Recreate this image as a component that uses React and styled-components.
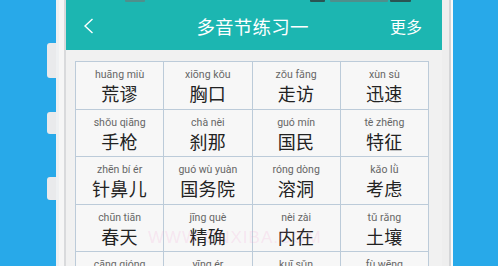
import React from 'react';
import styled, { createGlobalStyle } from 'styled-components';

const GlobalStyle = createGlobalStyle`
  html, body {
    margin: 0;
    padding: 0;
    background: #28a9e9;
  }
`;

const Stage = styled.div`
  display: flex;
  height: 266px;
  width: 498px;
  overflow: hidden;
  background: #28a9e9;
  font-family: "Noto Sans", "Noto Sans CJK SC", sans-serif;
`;

const BlueSide = styled.div`
  width: ${props => props.w}px;
  flex-shrink: 0;
`;

const ButtonRail = styled.div`
  width: 9px;
  flex-shrink: 0;
  display: flex;
  flex-direction: column;
  padding-top: 43px;
`;

const SideButton = styled.div`
  height: ${props => props.h}px;
  flex-shrink: 0;
  margin-bottom: ${props => props.gap}px;
  background: #e9eaec;
  border-radius: 3px 0 0 3px;
`;

const Bezel = styled.div`
  width: ${props => props.w}px;
  flex-shrink: 0;
  background: #f6f6f6;
  box-sizing: border-box;
  ${props => props.side === 'left'
    ? 'border-right: 2px solid #d9dadc;'
    : 'border-left: 7px solid #eeeeee; border-right: 2px solid #fafafa;'}
  box-shadow: ${props => props.side === 'left' ? 'inset 3px 0 0 #eef0f2' : 'inset 2px 0 0 #d4d5d7'};
`;

const Screen = styled.div`
  width: 376px;
  flex-shrink: 0;
  background: #f1f1f1;
  display: flex;
  flex-direction: column;
  overflow: hidden;
`;

const Header = styled.div`
  background: #1cb6b1;
  height: 50px;
  flex-shrink: 0;
  display: flex;
  flex-direction: column;
`;

const StatusStrip = styled.div`
  height: 3px;
  flex-shrink: 0;
  display: flex;
  padding-left: 59px;
`;

const StatusMark = styled.span`
  width: ${props => props.w}px;
  margin-left: ${props => props.ml || 0}px;
  height: 2px;
  background: ${props => props.dark ? '#2a5453' : '#4f8f8c'};
  border-radius: 0 0 1px 1px;
`;

const NavRow = styled.div`
  flex: 1;
  display: grid;
  grid-template-columns: 60px 1fr 60px;
  align-items: center;
  padding: 0 20px 1px 17px;
`;

const BackButton = styled.div`
  display: flex;
  align-items: center;
`;

const Title = styled.div`
  text-align: center;
  color: #ffffff;
  font-size: 18.5px;
  font-family: "Noto Sans CJK SC", sans-serif;
  letter-spacing: 0.2px;
`;

const More = styled.div`
  text-align: right;
  color: #ffffff;
  font-size: 16px;
  font-family: "Noto Sans CJK SC", sans-serif;
`;

const Body = styled.div`
  position: relative;
  flex-shrink: 0;
  padding: 11px 13px 0 9px;
`;

const Grid = styled.div`
  display: grid;
  grid-template-columns: repeat(4, 1fr);
  grid-auto-rows: 47.5px;
  border-top: 1px solid #bccbd9;
  border-left: 1px solid #bccbd9;
  background: #f7f7f7;
`;

const Cell = styled.div`
  border-right: 1px solid #bccbd9;
  border-bottom: 1px solid #bccbd9;
  display: flex;
  flex-direction: column;
  align-items: center;
  padding-top: 7px;
`;

const Pinyin = styled.div`
  font-family: Roboto, "Noto Sans", sans-serif;
  font-size: 10.5px;
  line-height: 12px;
  color: #666666;
`;

const Hanzi = styled.div`
  font-family: "Noto Sans CJK SC", sans-serif;
  font-size: 18px;
  line-height: 23px;
  margin-top: 1px;
  color: #222222;
  letter-spacing: 0.5px;
`;

const Watermark = styled.div`
  position: absolute;
  left: 82px;
  top: 178px;
  font-family: "Liberation Sans", sans-serif;
  font-size: 17px;
  letter-spacing: 1px;
  color: rgba(244, 150, 205, 0.18);
  pointer-events: none;
`;

const words = [
  ['huāng miù', '荒谬'], ['xiōng kǒu', '胸口'], ['zǒu fǎng', '走访'], ['xùn sù', '迅速'],
  ['shǒu qiāng', '手枪'], ['chà nèi', '刹那'], ['guó mín', '国民'], ['tè zhēng', '特征'],
  ['zhēn bí ér', '针鼻儿'], ['guó wù yuàn', '国务院'], ['róng dòng', '溶洞'], ['kǎo lǜ', '考虑'],
  ['chūn tiān', '春天'], ['jīng què', '精确'], ['nèi zài', '内在'], ['tǔ rǎng', '土壤'],
  ['cāng qióng', '苍穹'], ['yīng ér', '婴儿'], ['kuī sǔn', '亏损'], ['fù wēng', '富翁'],
];

export default function App() {
  return (
    <>
      <GlobalStyle />
      <Stage>
        <BlueSide w={47} />
        <ButtonRail>
          <SideButton h={35} gap={34} />
          <SideButton h={22} gap={43} />
          <SideButton h={23} gap={0} />
        </ButtonRail>
        <Bezel side="left" w={10} />
        <Screen>
          <Header>
            <StatusStrip>
              <StatusMark w={20} />
              <StatusMark w={15} ml={165} dark />
              <StatusMark w={58} ml={5} />
              <StatusMark w={21} ml={2} dark />
            </StatusStrip>
            <NavRow>
              <BackButton>
                <svg width="11" height="16" viewBox="0 0 11 16">
                  <path d="M9.5 1 L2 8 L9.5 15" fill="none" stroke="#ffffff" strokeWidth="1.4" />
                </svg>
              </BackButton>
              <Title>多音节练习一</Title>
              <More>更多</More>
            </NavRow>
          </Header>
          <Body>
            <Grid>
              {words.map(([py, hz]) => (
                <Cell key={hz}>
                  <Pinyin>{py}</Pinyin>
                  <Hanzi>{hz}</Hanzi>
                </Cell>
              ))}
            </Grid>
            <Watermark>WWW.CNXIBA.COM</Watermark>
          </Body>
        </Screen>
        <Bezel side="right" w={11} />
        <BlueSide w={45} />
      </Stage>
    </>
  );
}
